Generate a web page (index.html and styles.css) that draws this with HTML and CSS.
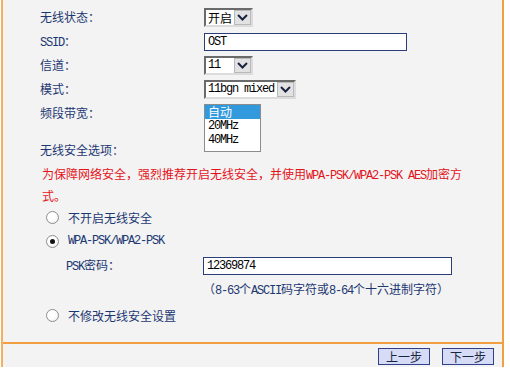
FILE: index.html
```html
<!DOCTYPE html>
<html lang="zh-CN">
  <head>
    <meta charset="UTF-8" />
    <title>无线设置</title>
    <link rel="stylesheet" href="styles.css">
  </head>
  <body>
    <div class="page">
      <div class="main">
        <div class="row">
          <span class="lbl">无线状态：</span>
          <div class="sel w49">
            <span class="val">开启</span>
            <span class="btn"><svg width="11" height="7" viewBox="0 0 11 7"><polyline points="1,1 5.5,5.5 10,1" fill="none" stroke="#1a2540" stroke-width="2"/></svg></span>
          </div>
        </div>
        <div class="row">
          <span class="lbl"><span class="en">SSID</span>：</span>
          <input class="txt ssid" type="text" value="OST" />
        </div>
        <div class="row">
          <span class="lbl">信道：</span>
          <div class="sel w49">
            <span class="val en">11</span>
            <span class="btn"><svg width="11" height="7" viewBox="0 0 11 7"><polyline points="1,1 5.5,5.5 10,1" fill="none" stroke="#1a2540" stroke-width="2"/></svg></span>
          </div>
        </div>
        <div class="row">
          <span class="lbl">模式：</span>
          <div class="sel w92">
            <span class="val en">11bgn mixed</span>
            <span class="btn"><svg width="11" height="7" viewBox="0 0 11 7"><polyline points="1,1 5.5,5.5 10,1" fill="none" stroke="#1a2540" stroke-width="2"/></svg></span>
          </div>
        </div>
        <div class="row">
          <span class="lbl">频段带宽：</span>
          <div class="drop">
            <ul class="list">
              <li class="on">自动</li>
              <li class="en">20MHz</li>
              <li class="en">40MHz</li>
            </ul>
          </div>
        </div>

        <div class="title">无线安全选项：</div>
        <p class="warn">为保障网络安全，强烈推荐开启无线安全，并使用<span class="en">WPA-PSK/WPA2-PSK AES</span>加密方式。</p>

        <div class="opt"><span class="radio"></span>不开启无线安全</div>
        <div class="opt"><span class="radio checked"></span><span class="en">WPA-PSK/WPA2-PSK</span></div>
        <div class="psk">
          <span class="lbl"><span class="en">PSK</span>密码：</span>
          <input class="txt pass" type="text" value="12369874" />
        </div>
        <div class="hint">（<span class="en">8-63</span>个<span class="en">ASCII</span>码字符或<span class="en">8-64</span>个十六进制字符）</div>
        <div class="opt"><span class="radio"></span>不修改无线安全设置</div>
      </div>
      <div class="foot">
        <button class="nav">上一步</button>
        <button class="nav">下一步</button>
      </div>
    </div>
  </body>
</html>
```

FILE: styles.css
```css
body {
  margin: 0;
  background-color: #ffffff;
  font-family: "Noto Sans CJK SC", "Liberation Sans", sans-serif;
  font-size: 12px;
  color: #1c3772;
}

.page {
  margin-left: 1px;
  width: 499px;
  border-left: 2px solid #f2b060;
  border-right: 2px solid #f0a040;
  background-color: #f3f3f3;
}

.main {
  height: 337px;
  padding: 5px 0 0 37px;
}

/* latin text, half width like the old router font */
.en {
  font-family: "Liberation Mono", monospace;
  font-size: 12px;
  letter-spacing: -1.2px;
}

.row {
  display: grid;
  grid-template-columns: 164px auto;
  align-items: center;
  height: 24px;
}

.lbl {
  line-height: 24px;
}

/* fake select boxes */
.sel {
  display: flex;
  align-items: center;
  height: 15px;
  background-color: #ffffff;
  border-top: 2px solid #6a6a6a;
  border-left: 2px solid #6a6a6a;
  border-right: 2px solid #dcdcdc;
  border-bottom: 2px solid #dcdcdc;
  color: #000000;
}

.w49 {
  width: 45px;
}

.w92 {
  width: 88px;
}

.val {
  flex: 1;
  padding-left: 2px;
  line-height: 15px;
  white-space: nowrap;
}

.btn {
  display: flex;
  align-items: center;
  justify-content: center;
  width: 15px;
  height: 13px;
  background-color: #e2e2e2;
  border: 1px solid #b8b8b8;
}

.txt {
  box-sizing: border-box;
  height: 18px;
  padding: 0 3px;
  border: 1px solid #2a3f7a;
  background-color: #ffffff;
  font-family: "Liberation Mono", monospace;
  font-size: 12px;
  letter-spacing: -1.2px;
  color: #000000;
  outline: none;
}

.ssid {
  width: 203px;
}

.pass {
  width: 249px;
}

/* the open dropdown list lies over the rows below */
.drop {
  position: relative;
  align-self: start;
}

.list {
  position: absolute;
  top: 3px;
  left: 0;
  box-sizing: border-box;
  width: 57px;
  height: 48px;
  margin: 0;
  padding: 0;
  list-style: none;
  background-color: #ffffff;
  border: 1px solid #8c8c8c;
  color: #000000;
  z-index: 2;
}

.list li {
  height: 14px;
  line-height: 14px;
  padding-left: 3px;
}

.list li.on {
  background-color: #3399dd;
  color: #ffffff;
}

.title {
  margin-top: 13px;
  line-height: 24px;
}

.warn {
  width: 426px;
  margin: 2px 0 0 2px;
  line-height: 19px;
  color: #e4141c;
}

.opt {
  display: flex;
  align-items: center;
  height: 24px;
}

.radio {
  box-sizing: border-box;
  width: 13px;
  height: 13px;
  margin: 0 9px 0 6px;
  border: 1px solid #8d8d8d;
  border-radius: 50%;
  background: radial-gradient(circle at 40% 40%, #ffffff 40%, #e6e6e6 100%);
  display: flex;
  align-items: center;
  justify-content: center;
}

.radio.checked::after {
  content: "";
  width: 5px;
  height: 5px;
  border-radius: 50%;
  background-color: #111111;
}

.psk {
  display: grid;
  grid-template-columns: 137px auto;
  align-items: center;
  height: 24px;
  padding-left: 26px;
}

.hint {
  line-height: 24px;
  padding-left: 163px;
}

.foot {
  display: flex;
  justify-content: flex-end;
  gap: 12px;
  box-sizing: border-box;
  height: 25px;
  padding: 4px 8px 0 0;
  border-top: 2px solid #f0a040;
}

.nav {
  width: 52px;
  height: 17px;
  padding: 0;
  border: 1px solid #303f8a;
  background-color: #d6dcf6;
  font-family: "Noto Sans CJK SC", sans-serif;
  font-size: 12px;
  line-height: 15px;
  color: #1a2540;
}
```
